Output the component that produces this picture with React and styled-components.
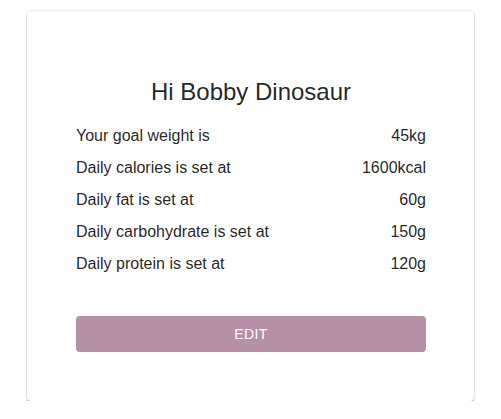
import React from "react";
import styled, { createGlobalStyle } from "styled-components";

const GlobalStyle = createGlobalStyle`
  html, body {
    margin: 0;
    padding: 0;
    background: #ffffff;
    font-family: "Liberation Sans", Arial, Helvetica, sans-serif;
    color: rgba(0, 0, 0, 0.87);
  }
`;

const Page = styled.div`
  display: flex;
  justify-content: center;
  padding-top: 11px;
`;

const Card = styled.section`
  box-sizing: border-box;
  width: 447px;
  height: 390px;
  padding: 65px 48px 0 49px;
  background: #fff;
  border-radius: 4px;
  box-shadow: 0 0 0 1px rgba(0, 0, 0, 0.05),
    0px 2px 1px -1px rgba(0, 0, 0, 0.25),
    0px 1px 1px 0px rgba(0, 0, 0, 0.16), 0px 1px 3px 0px rgba(0, 0, 0, 0.14);
  display: flex;
  flex-direction: column;
`;

const Title = styled.h1`
  margin: 0;
  font-size: 24px;
  font-weight: 400;
  line-height: 32px;
  text-align: center;
`;

const List = styled.div`
  margin-top: 12px;
  display: flex;
  flex-direction: column;
`;

const Row = styled.div`
  display: flex;
  justify-content: space-between;
  font-size: 16px;
  line-height: 32px;
`;

const EditButton = styled.button`
  margin-top: 36px;
  height: 36px;
  width: 100%;
  border: none;
  border-radius: 4px;
  background: #b590a6;
  color: #ffffff;
  font-family: "Liberation Sans", Arial, Helvetica, sans-serif;
  font-size: 14px;
  font-weight: 500;
  letter-spacing: 0.02857em;
  text-transform: uppercase;
  cursor: pointer;
`;

const rows = [
  ["Your goal weight is", "45kg"],
  ["Daily calories is set at", "1600kcal"],
  ["Daily fat is set at", "60g"],
  ["Daily carbohydrate is set at", "150g"],
  ["Daily protein is set at", "120g"],
];

export default function App() {
  return (
    <>
      <GlobalStyle />
      <Page>
        <Card>
          <Title>Hi Bobby Dinosaur</Title>
          <List>
            {rows.map(([label, value]) => (
              <Row key={label}>
                <span>{label}</span>
                <span>{value}</span>
              </Row>
            ))}
          </List>
          <EditButton>Edit</EditButton>
        </Card>
      </Page>
    </>
  );
}
